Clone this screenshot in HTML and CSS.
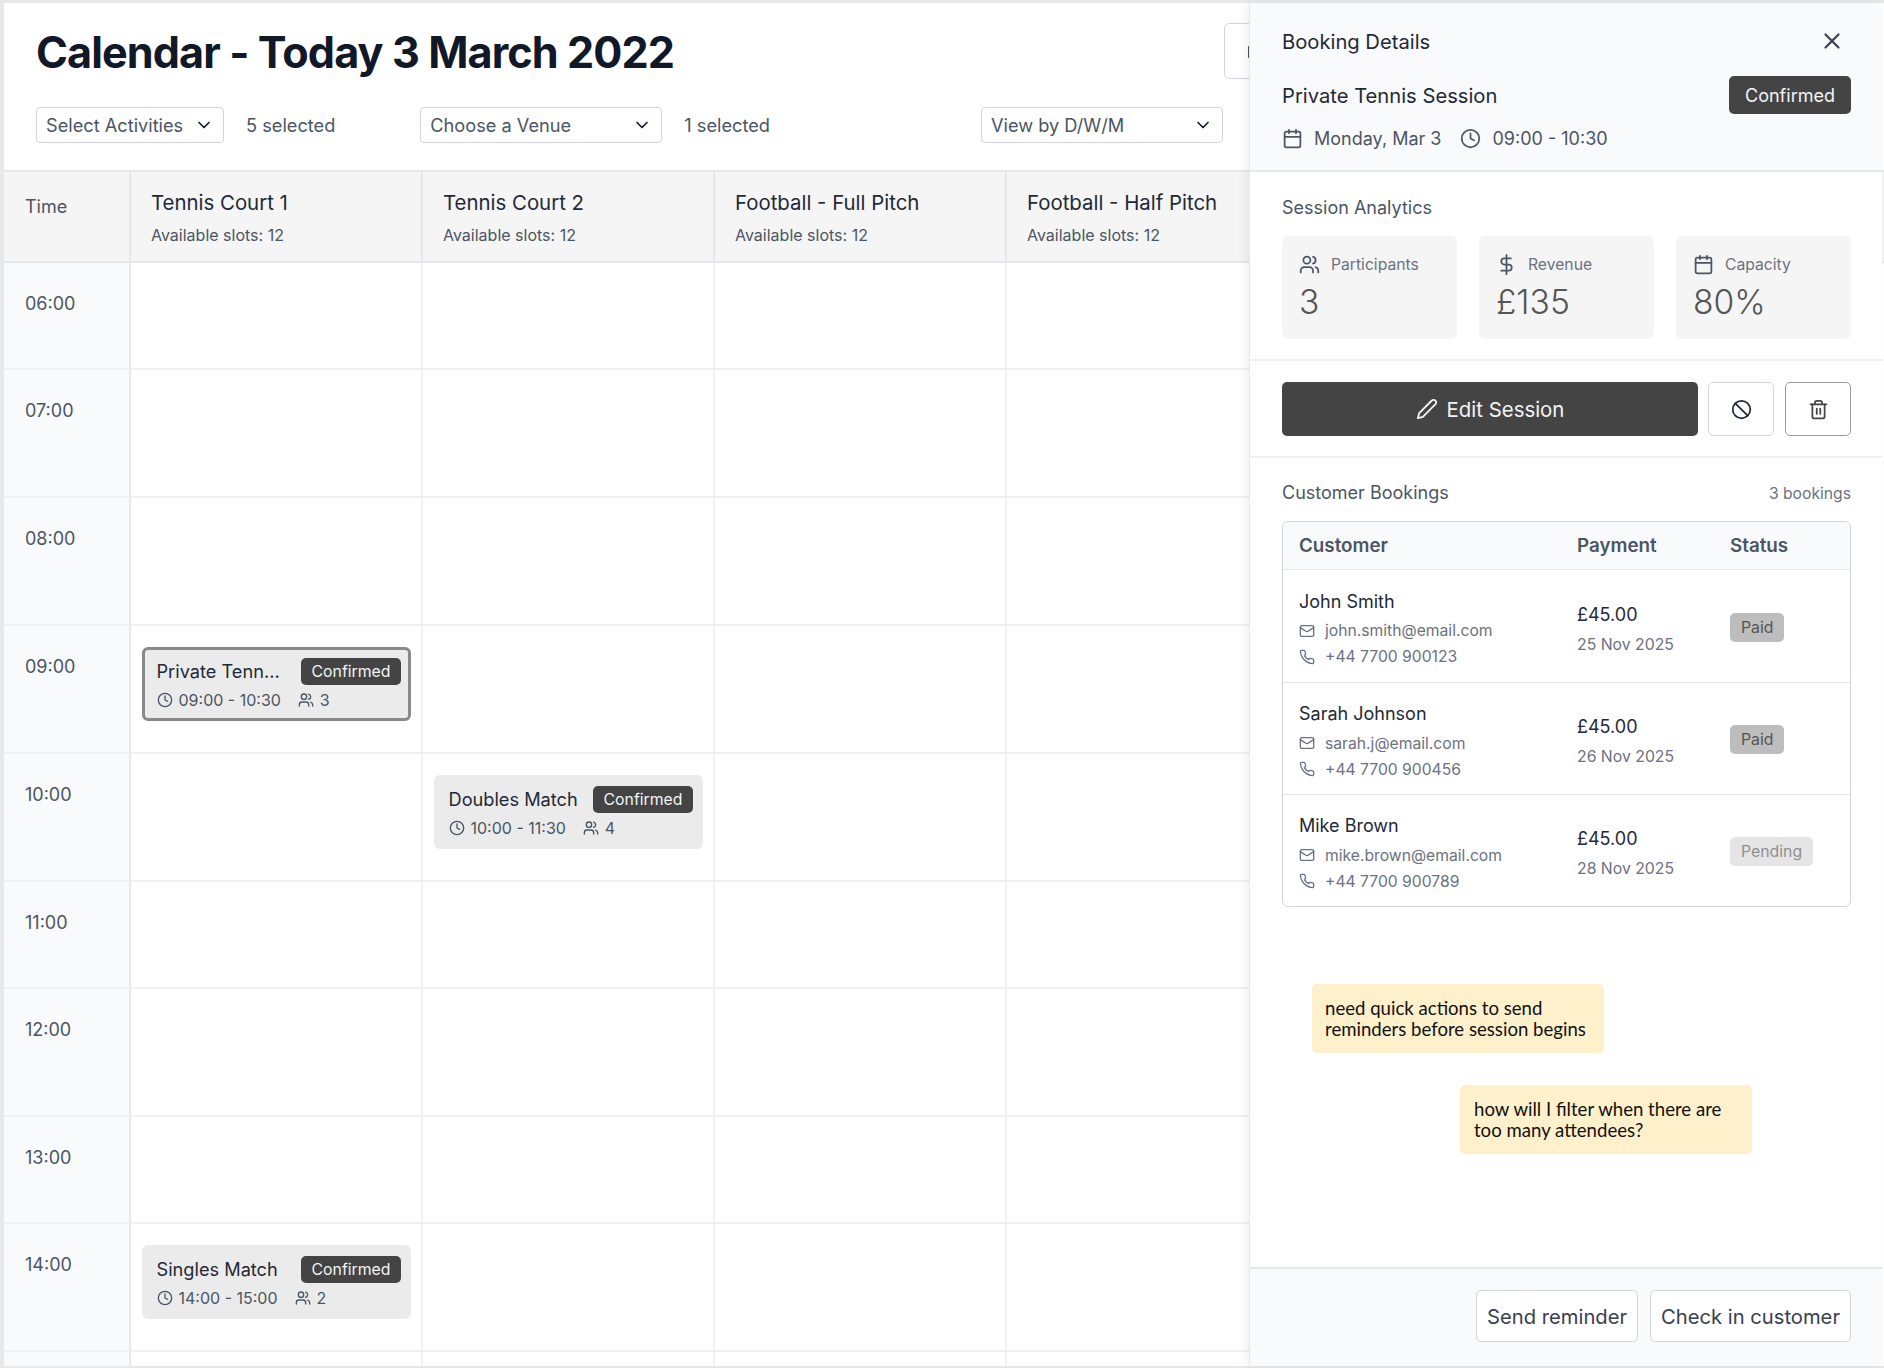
FILE: index.html
```html
<!DOCTYPE html>
<html lang="en">
<head>
    <meta charset="UTF-8">
    <meta name="viewport" content="width=device-width, initial-scale=1.0">
    <title>Calendar</title>
    <link rel="stylesheet" href="styles.css">
</head>
<body>
    <svg class="sprite" xmlns="http://www.w3.org/2000/svg">
        <symbol id="i-clock" viewBox="0 0 24 24"><circle cx="12" cy="12" r="10"/><polyline points="12 6 12 12 16 14"/></symbol>
        <symbol id="i-users" viewBox="0 0 24 24"><path d="M16 21v-2a4 4 0 0 0-4-4H6a4 4 0 0 0-4 4v2"/><circle cx="9" cy="7" r="4"/><path d="M22 21v-2a4 4 0 0 0-3-3.87"/><path d="M16 3.13a4 4 0 0 1 0 7.75"/></symbol>
        <symbol id="i-calendar" viewBox="0 0 24 24"><rect x="3" y="4" width="18" height="18" rx="2"/><path d="M16 2v4M8 2v4M3 10h18"/></symbol>
        <symbol id="i-dollar" viewBox="0 0 24 24"><path d="M12 1v22"/><path d="M17 5H9.5a3.5 3.5 0 0 0 0 7h5a3.5 3.5 0 0 1 0 7H6"/></symbol>
        <symbol id="i-mail" viewBox="0 0 24 24"><rect x="2" y="4" width="20" height="16" rx="2"/><path d="m22 7-8.97 5.7a1.94 1.94 0 0 1-2.06 0L2 7"/></symbol>
        <symbol id="i-phone" viewBox="0 0 24 24"><path d="M22 16.92v3a2 2 0 0 1-2.18 2 19.79 19.79 0 0 1-8.63-3.07 19.5 19.5 0 0 1-6-6 19.79 19.79 0 0 1-3.07-8.67A2 2 0 0 1 4.11 2h3a2 2 0 0 1 2 1.72 12.84 12.84 0 0 0 .7 2.81 2 2 0 0 1-.45 2.11L8.09 9.91a16 16 0 0 0 6 6l1.27-1.27a2 2 0 0 1 2.11-.45 12.84 12.84 0 0 0 2.81.7A2 2 0 0 1 22 16.92z"/></symbol>
        <symbol id="i-pencil" viewBox="0 0 24 24"><path d="M17 3a2.85 2.83 0 1 1 4 4L7.5 20.5 2 22l1.5-5.5Z"/></symbol>
        <symbol id="i-ban" viewBox="0 0 24 24"><circle cx="12" cy="12" r="10"/><path d="m4.9 4.9 14.2 14.2"/></symbol>
        <symbol id="i-trash" viewBox="0 0 24 24"><path d="M3 6h18"/><path d="M19 6v14c0 1-1 2-2 2H7c-1 0-2-1-2-2V6"/><path d="M8 6V4c0-1 1-2 2-2h4c1 0 2 1 2 2v2"/><path d="M10 11v6M14 11v6"/></symbol>
        <symbol id="i-x" viewBox="0 0 24 24"><path d="M18 6 6 18M6 6l12 12"/></symbol>
        <symbol id="i-chevron" viewBox="0 0 24 24"><path d="m6 9 6 6 6-6"/></symbol>
    </svg>

    <div class="frame">
        <main class="calendar">
            <header class="cal-header">
                <div class="cal-title-row">
                    <h1>Calendar - Today 3 March 2022</h1>
                    <div class="hidden-btn"><span class="hidden-btn__mark"></span></div>
                </div>
                <div class="filters">
                    <div class="select select--activities">Select Activities <svg class="icon"><use href="#i-chevron"/></svg></div>
                    <span class="filters__count">5 selected</span>
                    <div class="select select--venue">Choose a Venue <svg class="icon"><use href="#i-chevron"/></svg></div>
                    <span class="filters__count filters__count--last">1 selected</span>
                    <div class="select select--view">View by D/W/M <svg class="icon"><use href="#i-chevron"/></svg></div>
                </div>
            </header>

            <div class="row row--head">
                <div class="time time--head">Time</div>
                <div class="court"><div class="court__name">Tennis Court 1</div><div class="court__slots">Available slots: 12</div></div>
                <div class="court"><div class="court__name">Tennis Court 2</div><div class="court__slots">Available slots: 12</div></div>
                <div class="court"><div class="court__name">Football - Full Pitch</div><div class="court__slots">Available slots: 12</div></div>
                <div class="court"><div class="court__name">Football - Half Pitch</div><div class="court__slots">Available slots: 12</div></div>
            </div>

            <div class="row row--short"><div class="time">06:00</div><div class="cell"></div><div class="cell"></div><div class="cell"></div><div class="cell"></div></div>
            <div class="row"><div class="time">07:00</div><div class="cell"></div><div class="cell"></div><div class="cell"></div><div class="cell"></div></div>
            <div class="row"><div class="time">08:00</div><div class="cell"></div><div class="cell"></div><div class="cell"></div><div class="cell"></div></div>
            <div class="row">
                <div class="time">09:00</div>
                <div class="cell">
                    <div class="event event--active">
                        <div class="event__top"><span class="event__name">Private Tenn...</span><span class="badge">Confirmed</span></div>
                        <div class="event__meta"><svg class="icon"><use href="#i-clock"/></svg><span class="event__time">09:00 - 10:30</span><svg class="icon"><use href="#i-users"/></svg><span>3</span></div>
                    </div>
                </div>
                <div class="cell"></div><div class="cell"></div><div class="cell"></div>
            </div>
            <div class="row">
                <div class="time">10:00</div>
                <div class="cell"></div>
                <div class="cell">
                    <div class="event">
                        <div class="event__top"><span class="event__name">Doubles Match</span><span class="badge">Confirmed</span></div>
                        <div class="event__meta"><svg class="icon"><use href="#i-clock"/></svg><span class="event__time">10:00 - 11:30</span><svg class="icon"><use href="#i-users"/></svg><span>4</span></div>
                    </div>
                </div>
                <div class="cell"></div><div class="cell"></div>
            </div>
            <div class="row row--short"><div class="time">11:00</div><div class="cell"></div><div class="cell"></div><div class="cell"></div><div class="cell"></div></div>
            <div class="row"><div class="time">12:00</div><div class="cell"></div><div class="cell"></div><div class="cell"></div><div class="cell"></div></div>
            <div class="row row--short"><div class="time">13:00</div><div class="cell"></div><div class="cell"></div><div class="cell"></div><div class="cell"></div></div>
            <div class="row">
                <div class="time">14:00</div>
                <div class="cell">
                    <div class="event">
                        <div class="event__top"><span class="event__name">Singles Match</span><span class="badge">Confirmed</span></div>
                        <div class="event__meta"><svg class="icon"><use href="#i-clock"/></svg><span class="event__time">14:00 - 15:00</span><svg class="icon"><use href="#i-users"/></svg><span>2</span></div>
                    </div>
                </div>
                <div class="cell"></div><div class="cell"></div><div class="cell"></div>
            </div>
            <div class="row"><div class="time"></div><div class="cell"></div><div class="cell"></div><div class="cell"></div><div class="cell"></div></div>
        </main>

        <aside class="panel">
            <section class="panel__head">
                <div class="panel__title-row">
                    <h2>Booking Details</h2>
                    <svg class="icon icon--close"><use href="#i-x"/></svg>
                </div>
                <div class="panel__session-row">
                    <h3>Private Tennis Session</h3>
                    <span class="badge badge--big">Confirmed</span>
                </div>
                <div class="panel__when">
                    <svg class="icon"><use href="#i-calendar"/></svg><span class="panel__date">Monday, Mar 3</span>
                    <svg class="icon"><use href="#i-clock"/></svg><span>09:00 - 10:30</span>
                </div>
            </section>

            <section class="analytics">
                <div class="section-title">Session Analytics</div>
                <div class="stats">
                    <div class="stat">
                        <div class="stat__label"><svg class="icon"><use href="#i-users"/></svg>Participants</div>
                        <div class="stat__value">3</div>
                    </div>
                    <div class="stat">
                        <div class="stat__label"><svg class="icon"><use href="#i-dollar"/></svg>Revenue</div>
                        <div class="stat__value">£135</div>
                    </div>
                    <div class="stat">
                        <div class="stat__label"><svg class="icon"><use href="#i-calendar"/></svg>Capacity</div>
                        <div class="stat__value">80%</div>
                    </div>
                </div>
            </section>

            <section class="actions">
                <button class="btn-edit"><svg class="icon"><use href="#i-pencil"/></svg>Edit Session</button>
                <button class="btn-icon btn-icon--ban"><svg class="icon"><use href="#i-ban"/></svg></button>
                <button class="btn-icon btn-icon--dark"><svg class="icon"><use href="#i-trash"/></svg></button>
            </section>

            <section class="bookings">
                <div class="bookings__head">
                    <div class="section-title">Customer Bookings</div>
                    <span class="bookings__count">3 bookings</span>
                </div>
                <div class="table">
                    <div class="table__row table__row--head">
                        <div>Customer</div><div>Payment</div><div>Status</div>
                    </div>
                    <div class="table__row">
                        <div class="customer">
                            <div class="customer__name">John Smith</div>
                            <div class="customer__line"><svg class="icon"><use href="#i-mail"/></svg>john.smith@email.com</div>
                            <div class="customer__line"><svg class="icon"><use href="#i-phone"/></svg>+44 7700 900123</div>
                        </div>
                        <div class="pay">
                            <div class="pay__amount">£45.00</div>
                            <div class="pay__date">25 Nov 2025</div>
                        </div>
                        <div class="status"><span class="pill">Paid</span></div>
                    </div>
                    <div class="table__row">
                        <div class="customer">
                            <div class="customer__name">Sarah Johnson</div>
                            <div class="customer__line"><svg class="icon"><use href="#i-mail"/></svg>sarah.j@email.com</div>
                            <div class="customer__line"><svg class="icon"><use href="#i-phone"/></svg>+44 7700 900456</div>
                        </div>
                        <div class="pay">
                            <div class="pay__amount">£45.00</div>
                            <div class="pay__date">26 Nov 2025</div>
                        </div>
                        <div class="status"><span class="pill">Paid</span></div>
                    </div>
                    <div class="table__row">
                        <div class="customer">
                            <div class="customer__name">Mike Brown</div>
                            <div class="customer__line"><svg class="icon"><use href="#i-mail"/></svg>mike.brown@email.com</div>
                            <div class="customer__line"><svg class="icon"><use href="#i-phone"/></svg>+44 7700 900789</div>
                        </div>
                        <div class="pay">
                            <div class="pay__amount">£45.00</div>
                            <div class="pay__date">28 Nov 2025</div>
                        </div>
                        <div class="status"><span class="pill pill--pending">Pending</span></div>
                    </div>
                </div>
            </section>

            <div class="panel__spacer"></div>

            <footer class="panel__foot">
                <button class="btn-foot">Send reminder</button>
                <button class="btn-foot">Check in customer</button>
            </footer>

            <div class="note note--one">need quick actions to send<br>reminders before session begins</div>
            <div class="note note--two">how will I filter when there are<br>too many attendees?</div>
        </aside>
    </div>
</body>
</html>
```

FILE: styles.css
```css
* {
    box-sizing: border-box;
}
body {
    margin: 0;
    padding: 0;
    background: #e8e8e8;
    font-family: "Inter", "Liberation Sans", sans-serif;
    color: #111827;
}
h1, h2, h3 {
    margin: 0;
    font-weight: 400;
}
.sprite {
    display: none;
}
.icon {
    width: 18px;
    height: 18px;
    fill: none;
    stroke: currentColor;
    stroke-width: 2;
    stroke-linecap: round;
    stroke-linejoin: round;
    flex-shrink: 0;
}

.frame {
    position: relative;
    width: 1884px;
    height: 1368px;
    padding: 3px 0 2px 4px;
    overflow: hidden;
}
.calendar {
    height: 100%;
    background: #fff;
    overflow: hidden;
}

/* header above the grid */
.cal-header {
    height: 167px;
    padding-left: 32px;
}
.cal-title-row {
    display: flex;
    justify-content: space-between;
    height: 104px;
    padding-top: 20px;
}
.cal-title-row h1 {
    margin-top: 1px;
    font-size: 43.2px;
    line-height: 56px;
    font-weight: 700;
    color: #111827;
    letter-spacing: -0.92px;
}
.hidden-btn {
    width: 60px;
    height: 56px;
    margin-right: 600px;
    background: #fff;
    border: 1px solid #d1d5db;
    border-radius: 5px;
    padding: 22px 0 0 23px;
}
.hidden-btn__mark {
    display: block;
    width: 3px;
    height: 12px;
    background: #555;
}
.filters {
    display: flex;
    align-items: center;
}
.select {
    display: flex;
    align-items: center;
    justify-content: space-between;
    height: 36px;
    padding: 0 9px;
    background: #fff;
    border: 1px solid #d1d5db;
    border-radius: 4px;
    font-size: 18.2px;
    color: #4b5563;
}
.select .icon {
    width: 20px;
    height: 20px;
    color: #111827;
}
.select--activities {
    width: 188px;
}
.select--venue {
    width: 242px;
}
.select--view {
    width: 242px;
}
.filters__count {
    margin-left: 22px;
    margin-right: 85px;
    font-size: 18.2px;
    color: #4b5563;
    white-space: nowrap;
}
.filters__count--last {
    margin-right: 211px;
}

/* grid */
.row {
    display: grid;
    grid-template-columns: 127px repeat(4, 292px);
    height: 128px;
}
.row--short {
    height: 107px;
}
.row--head {
    height: 93px;
    border-top: 2px solid #e5e7eb;
    border-bottom: 2px solid #e5e7eb;
    background: #f5f5f5;
}
.time {
    padding: 29px 0 0 21px;
    background: #f9fafb;
    border-right: 2px solid #e5e7eb;
    border-bottom: 2px solid #f0f1f3;
    font-size: 18px;
    line-height: 24px;
    color: #4b5563;
}
.time--head {
    background: #f5f5f5;
    border-bottom: 0;
    padding-top: 23px;
    font-size: 18px;
}
.court {
    padding: 17px 0 0 20px;
    border-right: 2px solid #e5e7eb;
}
.court__name {
    font-size: 20.4px;
    line-height: 28px;
    color: #1f2937;
}
.court__slots {
    margin-top: 8px;
    font-size: 16px;
    line-height: 20px;
    color: #4b5563;
}
.cell {
    padding: 21px 0 0 10.5px;
    border-right: 2px solid #f0f1f3;
    border-bottom: 2px solid #f0f1f3;
}
.event {
    width: 269.5px;
    height: 74px;
    padding: 11px 10px 0 15px;
    background: #ebebeb;
    border-radius: 6px;
}
.event--active {
    padding: 8px 7px 0 12px;
    border: 3px solid #8a8a8a;
    background: #ebebeb;
}
.event__top {
    display: flex;
    justify-content: space-between;
    align-items: center;
}
.event__name {
    font-size: 18.2px;
    line-height: 27px;
    color: #1f2937;
}
.badge {
    display: inline-block;
    padding: 0 10.5px;
    height: 27px;
    line-height: 27px;
    background: #444;
    border-radius: 5px;
    font-size: 15.8px;
    color: #f3f4f6;
}
.event__meta {
    display: flex;
    align-items: center;
    margin-top: 3px;
    font-size: 16px;
    line-height: 24px;
    color: #4b5563;
}
.event__meta .icon {
    width: 16px;
    height: 16px;
    margin-right: 6px;
}
.event__time {
    margin-right: 17px;
}

/* booking panel */
.panel {
    position: absolute;
    top: 3px;
    right: 2px;
    bottom: 2px;
    width: 633px;
    display: flex;
    flex-direction: column;
    background: #fff;
    border-left: 1px solid #e5e7eb;
    box-shadow: -4px 0 10px rgba(0, 0, 0, 0.06);
}
.panel__head {
    height: 169px;
    padding: 22px 31px 0 32px;
    background: #f9fafb;
    border-bottom: 2px solid #e5e7eb;
}
.panel__title-row {
    display: flex;
    justify-content: space-between;
    align-items: center;
    height: 32px;
}
.panel__title-row h2 {
    font-size: 20.2px;
    color: #1f2937;
}
.icon--close {
    width: 26px;
    height: 26px;
    margin-right: 6px;
    color: #374151;
}
.panel__session-row {
    display: flex;
    justify-content: space-between;
    align-items: center;
    height: 38px;
    margin-top: 19px;
}
.panel__session-row h3 {
    font-size: 20.2px;
    color: #1f2937;
}
.badge--big {
    height: 38px;
    line-height: 39px;
    padding: 0 16px;
    font-size: 18px;
}
.panel__when {
    display: flex;
    align-items: center;
    margin-top: 5px;
    height: 38px;
    font-size: 18px;
    color: #4b5563;
}
.panel__when .icon {
    width: 21px;
    height: 21px;
    margin-right: 11px;
}
.panel__date {
    margin-right: 19px;
}

.section-title {
    font-size: 18px;
    line-height: 24px;
    color: #4b5563;
}
.analytics {
    height: 189px;
    padding: 24px 31px 0 32px;
    border-bottom: 2px solid #f0f1f3;
}
.stats {
    display: grid;
    grid-template-columns: repeat(3, 175px);
    gap: 22px;
    margin-top: 16px;
}
.stat {
    height: 103px;
    padding: 16px 17px 0;
    background: #f5f5f5;
    border-radius: 6px;
}
.stat__label {
    display: flex;
    align-items: center;
    gap: 11px;
    height: 24px;
    font-size: 15.7px;
    color: #6b7280;
}
.stat__label .icon {
    width: 21px;
    height: 21px;
    color: #4b5563;
}
.stat__value {
    margin-top: 3px;
    font-size: 33.6px;
    line-height: 46px;
    font-weight: 300;
    color: #555;
}
.actions {
    display: flex;
    gap: 10px;
    height: 97px;
    padding: 21px 31px 0 32px;
    border-bottom: 2px solid #f0f1f3;
}
.actions button {
    height: 54px;
    border-radius: 5px;
    font-family: inherit;
    cursor: pointer;
}
.btn-edit {
    flex: 1;
    display: flex;
    align-items: center;
    justify-content: center;
    gap: 9px;
    background: #444;
    border: 0;
    color: #f3f4f6;
    font-size: 20.4px;
}
.btn-edit .icon {
    width: 22px;
    height: 22px;
}
.btn-icon {
    width: 66px;
    display: flex;
    align-items: center;
    justify-content: center;
    background: #fff;
    border: 1px solid #d1d5db;
    color: #1f2937;
}
.btn-icon .icon {
    width: 21px;
    height: 21px;
}
.btn-icon--ban {
    margin-right: 1px;
}
.btn-icon--dark {
    border-color: #9a9a9a;
    color: #444;
}
.bookings {
    padding: 22px 31px 0 32px;
}
.bookings__head {
    display: flex;
    justify-content: space-between;
    align-items: center;
    height: 26px;
}
.bookings__count {
    font-size: 15.7px;
    color: #6b7280;
}
.table {
    margin-top: 15px;
    border: 1px solid #d1d5db;
    border-radius: 6px;
    overflow: hidden;
}
.table__row {
    display: grid;
    grid-template-columns: 278px 153px 1fr;
    align-items: center;
    height: 112px;
    padding-left: 16px;
    border-top: 1px solid #e5e7eb;
}
.table__row--head {
    height: 48px;
    border-top: 0;
    border-bottom: 1px solid #e5e7eb;
    background: #f9fafb;
    font-size: 18.8px;
    font-weight: 600;
    color: #4b5563;
}
.table__row--head + .table__row {
    border-top: 0;
}
.customer {
    margin-top: 6px;
}
.customer__name {
    font-size: 18px;
    line-height: 26px;
    color: #1f2937;
}
.customer__line {
    display: flex;
    align-items: center;
    gap: 10px;
    height: 26px;
    font-size: 15.7px;
    color: #6b7280;
}
.customer__name + .customer__line {
    margin-top: 3px;
}
.customer__line .icon {
    width: 16px;
    height: 16px;
}
.pay {
    margin-top: 6px;
}
.pay__amount {
    font-size: 18px;
    line-height: 26px;
    color: #1f2937;
}
.pay__date {
    margin-top: 5px;
    font-size: 15.8px;
    line-height: 24px;
    color: #6b7280;
}
.status {
    margin-top: 2px;
}
.pill {
    display: block;
    width: fit-content;
    height: 29px;
    line-height: 29px;
    padding: 0 11px;
    background: #bdbdbd;
    border-radius: 5px;
    font-size: 15.8px;
    color: #555;
}
.pill--pending {
    background: #e5e5e5;
    color: #8f8f8f;
}
.panel__spacer {
    flex: 1;
}
.panel__foot {
    display: flex;
    justify-content: flex-end;
    gap: 12px;
    height: 99px;
    padding: 21px 31px 0 0;
    background: #f9fafb;
    border-top: 2px solid #e5e7eb;
}
.btn-foot {
    height: 52px;
    padding: 0 10px;
    background: #fff;
    border: 1px solid #d1d5db;
    border-radius: 5px;
    font-family: inherit;
    font-size: 20.2px;
    color: #374151;
}

/* sticky comments over the panel */
.note {
    position: absolute;
    width: 292px;
    height: 69px;
    padding: 14px 13px 0;
    background: #fdf0cb;
    border-radius: 5px;
    font-family: "Lato", "Liberation Sans", sans-serif;
    font-size: 18.6px;
    line-height: 21px;
    color: #111;
    white-space: nowrap;
}
.note--one {
    top: 981px;
    left: 62px;
}
.note--two {
    top: 1082px;
    left: 210px;
    padding-left: 14px;
}
```
